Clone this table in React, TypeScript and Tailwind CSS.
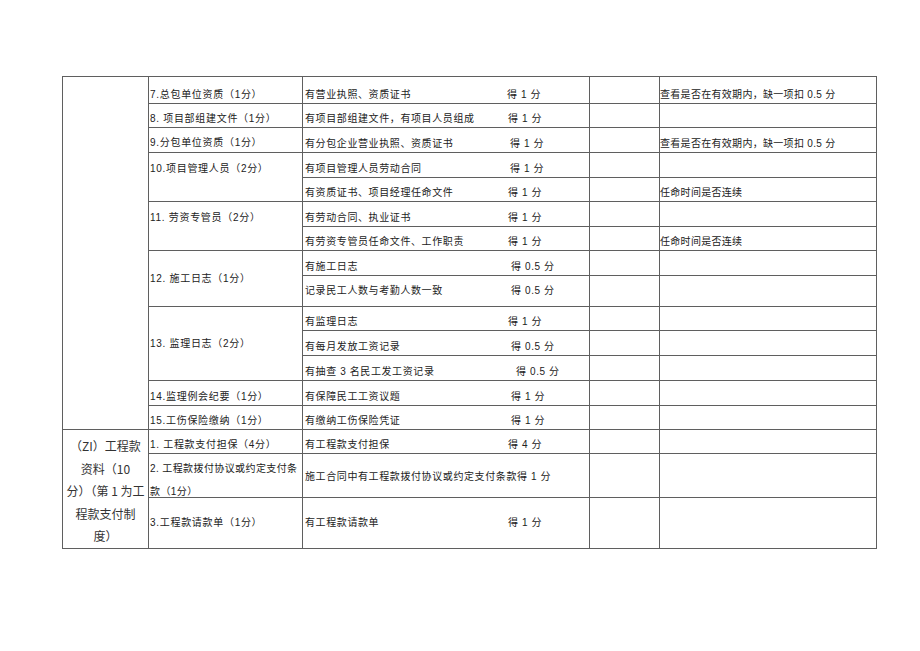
import React from "react";

type Sub = {
  desc: string;
  score?: string;
  descW?: string;
  note?: string;
  align?: string;
};

type Item = {
  label: string;
  align: string;
  subs: Sub[];
};

const NOTE_VALID = "查看是否在有效期内，缺一项扣 0.5 分";
const NOTE_TERM = "任命时间是否连续";

// 上半部分：劳务管理资料
const items: Item[] = [
  {
    label: "7.总包单位资质（1分）",
    align: "items-end pb-[1px]",
    subs: [{ desc: "有营业执照、资质证书", score: "得 1 分", descW: "w-[202px]", note: NOTE_VALID }],
  },
  {
    label: "8. 项目部组建文件（1分）",
    align: "items-end pb-[1px]",
    subs: [{ desc: "有项目部组建文件，有项目人员组成", score: "得 1 分", descW: "w-[203px]" }],
  },
  {
    label: "9.分包单位资质（1分）",
    align: "items-end pb-[2px]",
    subs: [{ desc: "有分包企业营业执照、资质证书", score: "得 1 分", descW: "w-[205px]", note: NOTE_VALID }],
  },
  {
    label: "10.项目管理人员（2分）",
    align: "items-start pt-[9px]",
    subs: [
      { desc: "有项目管理人员劳动合同", score: "得 1 分", descW: "w-[205px]" },
      { desc: "有资质证书、项目经理任命文件", score: "得 1 分", descW: "w-[203px]", note: NOTE_TERM },
    ],
  },
  {
    label: "11. 劳资专管员（2分）",
    align: "items-start pt-[9px]",
    subs: [
      { desc: "有劳动合同、执业证书", score: "得 1 分", descW: "w-[203px]" },
      { desc: "有劳资专管员任命文件、工作职责", score: "得 1 分", descW: "w-[203px]", note: NOTE_TERM },
    ],
  },
  {
    label: "12. 施工日志（1分）",
    align: "items-center",
    subs: [
      { desc: "有施工日志", score: "得 0.5 分", descW: "w-[206px]" },
      { desc: "记录民工人数与考勤人数一致", score: "得 0.5 分", descW: "w-[206px]", align: "items-center" },
    ],
  },
  {
    label: "13. 监理日志（2分）",
    align: "items-center",
    subs: [
      { desc: "有监理日志", score: "得 1 分", descW: "w-[203px]" },
      { desc: "有每月发放工资记录", score: "得 0.5 分", descW: "w-[206px]" },
      { desc: "有抽查 3 名民工发工资记录", score: "得 0.5 分", descW: "w-[211px]" },
    ],
  },
  {
    label: "14.监理例会纪要（1分）",
    align: "items-end pb-[1px]",
    subs: [{ desc: "有保障民工工资议题", score: "得 1 分", descW: "w-[206px]" }],
  },
  {
    label: "15.工伤保险缴纳（1分）",
    align: "items-end pb-[1px]",
    subs: [{ desc: "有缴纳工伤保险凭证", score: "得 1 分", descW: "w-[206px]" }],
  },
];

const cell = "border-r border-b border-[#5f5f5f] min-w-0 overflow-visible";
const small = "text-[10px] leading-[14px] whitespace-nowrap text-[#222]";

function Label({ text, align, span = "" }: { text: string; align: string; span?: string }) {
  return (
    <div className={`${cell} ${span} ${align} flex pl-[1px] tracking-[0.7px] ${small}`}>{text}</div>
  );
}

function Desc({ sub, align }: { sub: Sub; align?: string }) {
  return (
    <div className={`${cell} flex ${align ?? sub.align ?? "items-end pb-[1px]"} pl-[2px] tracking-[0.6px] ${small}`}>
      <span className={sub.descW}>{sub.desc}</span>
      {sub.score && <span>{sub.score}</span>}
    </div>
  );
}

function Note({ text }: { text?: string }) {
  return (
    <div className={`${cell} flex items-end pb-[1px] pl-0 tracking-[0.3px] ${small}`}>
      {text ?? ""}
    </div>
  );
}

export default function App() {
  return (
    <div
      className="min-h-screen bg-white pt-[76px] pl-[62px]"
      style={{ fontFamily: '"Liberation Sans", "Noto Sans CJK SC", sans-serif' }}
    >
      <div className="grid w-[815px] grid-cols-[86px_154px_287px_70px_217px] grid-rows-[27px_24px_25px_25px_24px_25px_24px_25px_31px_24px_25px_25px_25px_24px_24px_44px_51px] border-t border-l border-[#5f5f5f]">
        {/* 第一列空白 */}
        <div className={`${cell} row-span-14`} />
        {items.map((it) => (
          <React.Fragment key={it.label}>
            {it.subs.map((s, i) => (
              <React.Fragment key={s.desc}>
                {i === 0 && (
                  <Label
                    text={it.label}
                    align={it.align}
                    span={it.subs.length === 3 ? "row-span-3" : it.subs.length === 2 ? "row-span-2" : ""}
                  />
                )}
                <Desc sub={s} />
                <div className={cell} />
                <Note text={s.note} />
              </React.Fragment>
            ))}
          </React.Fragment>
        ))}

        {/* 工程款资料 */}
        <div
          className={`${cell} row-span-3 flex items-center justify-center text-center text-[12px] leading-[22.5px] text-[#333]`}
          style={{ fontFamily: '"Noto Sans CJK SC", sans-serif' }}
        >
          <div className="pt-[5px]">
            （ZI）工程款
            <br />
            资料（10
            <br />
            分）（第 1 为工
            <br />
            程款支付制
            <br />
            度）
          </div>
        </div>

        <Label text="1. 工程款支付担保（4分）" align="items-end pb-[1px]" />
        <Desc sub={{ desc: "有工程款支付担保", score: "得 4 分", descW: "w-[203px]" }} />
        <div className={cell} />
        <Note />

        <div className={`${cell} flex items-start pt-[3px] pl-[1px] tracking-[0.4px] text-[10px] leading-[23px] whitespace-nowrap text-[#222]`}>
          <div>
            2. 工程款拨付协议或约定支付条
            <br />
            款（1分）
          </div>
        </div>
        <Desc sub={{ desc: "施工合同中有工程款拨付协议或约定支付条款得 1 分" }} align="items-center pt-[2px]" />
        <div className={cell} />
        <Note />

        <Label text="3.工程款请款单（1分）" align="items-center" />
        <Desc sub={{ desc: "有工程款请款单", score: "得 1 分", descW: "w-[203px]" }} align="items-center" />
        <div className={cell} />
        <Note />
      </div>
    </div>
  );
}
